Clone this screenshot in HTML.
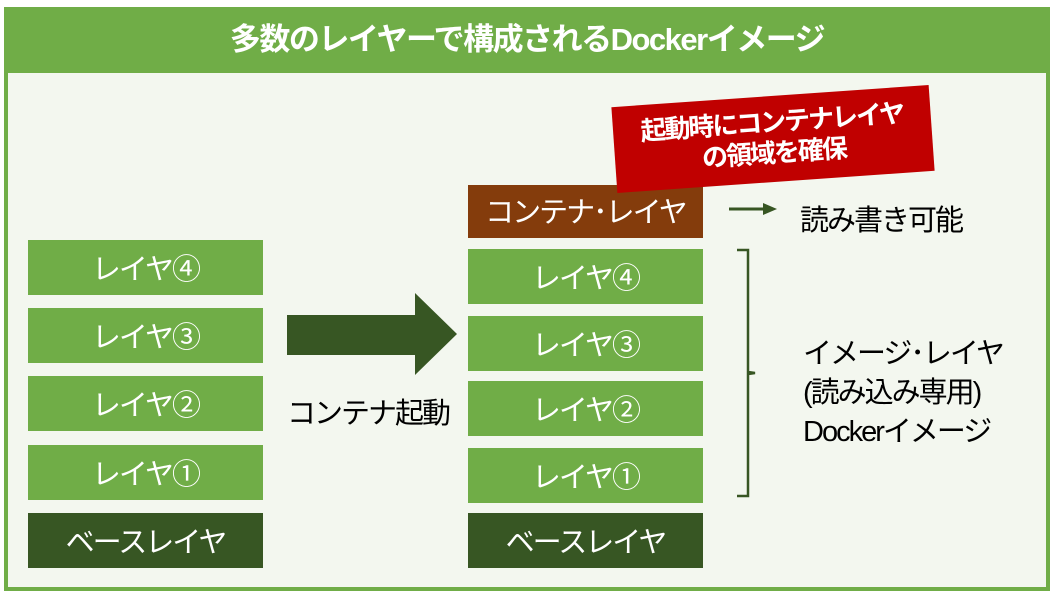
<!DOCTYPE html>
<html><head><meta charset="utf-8"><style>
*{margin:0;padding:0;box-sizing:border-box}
body{width:1055px;height:597px;background:#fff;position:relative;overflow:hidden;font-family:"Liberation Sans","Noto Sans CJK JP",sans-serif}
.frame{position:absolute;left:4px;top:7px;width:1046px;height:584px;border:4px solid #70ad47;background:#f3f7ef}
.hdr{position:absolute;left:4px;top:7px;width:1046px;height:66px;background:#70ad47;color:#fff;font-weight:bold;font-size:31px;text-align:center;line-height:66px;letter-spacing:-1.5px}
.b{position:absolute;width:235px;height:55px;color:#fff;font-size:29px;text-align:center;line-height:61px;background:#70ad47;letter-spacing:-2px}
.d{background:#375623}
.br{background:#843c0c}
.t{position:absolute;color:#000;font-size:29px;white-space:nowrap;letter-spacing:-2px}
</style></head><body>
<div class="frame"></div>
<div class="hdr">多数のレイヤーで構成されるDockerイメージ</div>

<div class="b" style="left:28px;top:240px">レイヤ④</div>
<div class="b" style="left:28px;top:308px">レイヤ③</div>
<div class="b" style="left:28px;top:376px">レイヤ②</div>
<div class="b" style="left:28px;top:445px">レイヤ①</div>
<div class="b d" style="left:28px;top:513px">ベースレイヤ</div>

<div class="b br" style="left:468px;top:185px;height:53px;line-height:57px">コンテナ･レイヤ</div>
<div class="b" style="left:468px;top:249px">レイヤ④</div>
<div class="b" style="left:468px;top:316px">レイヤ③</div>
<div class="b" style="left:468px;top:381px">レイヤ②</div>
<div class="b" style="left:468px;top:448px">レイヤ①</div>
<div class="b d" style="left:468px;top:513px">ベースレイヤ</div>

<svg style="position:absolute;left:0;top:0" width="1055" height="597">
<polygon points="287,315 415,315 415,293 457,334 415,375 415,355 287,355" fill="#375623"/>
<line x1="729" y1="209" x2="765" y2="209" stroke="#375623" stroke-width="3"/>
<polygon points="763,203 777,209 763,215" fill="#375623"/>
<path d="M737,250 H748 V372 L755,373 L748,374 V496 H737" fill="none" stroke="#375623" stroke-width="2.5"/>
</svg>

<div class="t" style="left:287px;top:390px">コンテナ起動</div>
<div class="t" style="left:800px;top:197px">読み書き可能</div>
<div class="t" style="left:803px;top:335px;line-height:39px">イメージ･レイヤ<br>(読み込み専用)<br>Dockerイメージ</div>

<div style="position:absolute;left:614px;top:96px;width:318px;height:86px;background:#c00000;transform:rotate(-4deg);color:#fff;font-weight:bold;font-size:26px;line-height:31px;text-align:center;padding-top:11px;letter-spacing:-2px">起動時にコンテナレイヤ<br>の領域を確保</div>
</body></html>
